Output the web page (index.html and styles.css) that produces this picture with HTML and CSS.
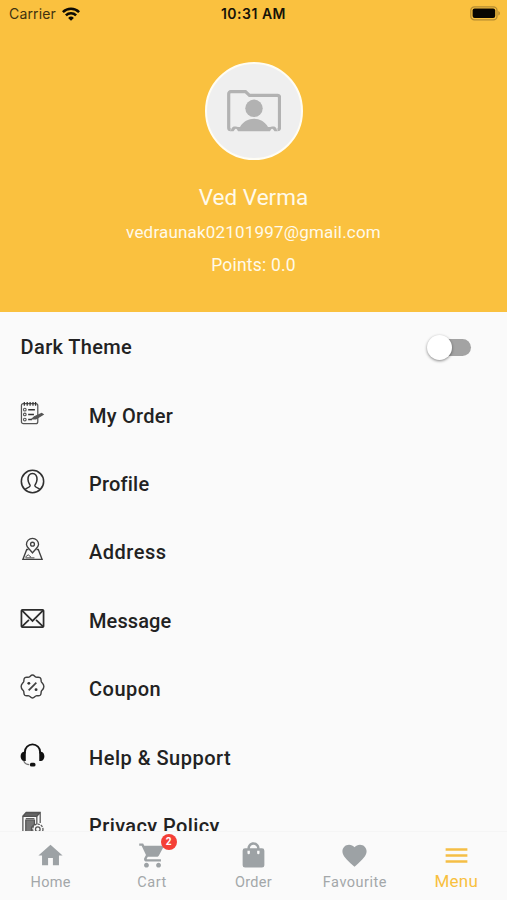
FILE: index.html
```html
<!DOCTYPE html>
<html lang="en">
<head>
<meta charset="utf-8">
<title>Menu</title>
<link rel="stylesheet" href="styles.css">
</head>
<body>
<div class="screen">
  <header class="header">
    <div class="status">
      <div class="carrier"><span>Carrier</span>
        <svg width="18" height="14" viewBox="0 0 18 14" fill="none" stroke="#0d0b04" stroke-width="2.6"><path d="M.9 5.1a11.6 11.6 0 0 1 16.2 0M3.9 8.400a7.3 7.3 0 0 1 10.2 0"/><path d="M9 13.800 6.1 10.900a4.2 4.2 0 0 1 5.8 0z" fill="#0d0b04" stroke="none"/></svg>
      </div>
      <time class="clock">10:31 AM</time>
      <svg class="battery" width="31" height="15" viewBox="0 0 31 15"><rect x=".8" y=".8" width="26.2" height="13" rx="3.6" fill="none" stroke="#b48c32" stroke-width="1.3"/><rect x="2.6" y="2.5" width="22.6" height="9.6" rx="2" fill="#080602"/><path d="M28.3 5v4.6c2.2-.8 2.2-3.8 0-4.6z" fill="#b48c32"/></svg>
    </div>
    <div class="avatar">
      <svg width="54" height="43" viewBox="0 0 54 43"><path d="M3.700 39.700a2 2 0 0 1-2-2V3.700a2 2 0 0 1 2-2h14.800l4 3.700h28a2 2 0 0 1 2 2v30.300a2 2 0 0 1-2 2" fill="none" stroke="#b2b2b2" stroke-width="3.200"/><path d="M11 41.300 10 39.500c-.5-1-1.700-1-2.200 0L6.500 41.300H3.500c1-2 1-4.300 3.500-4.800 2.500-.4 3.500 1 6 .5 6-11 22-11 28 0 2.500.5 3.500-.9 6-.5 2.500.5 2.500 2.800 3.500 4.800h-3L46.200 39.500c-.5-1-1.700-1-2.200 0l-1 1.800z" fill="#b2b2b2"/><circle cx="27" cy="18.300" r="8.700" fill="#b2b2b2"/></svg>
    </div>
    <div class="name"><span>Ved Verma</span></div>
    <div class="email"><span>vedraunak02101997@gmail.com</span></div>
    <div class="points"><span>Points: 0.0</span></div>
  </header>
  <main class="list">
    <div class="row theme"><span class="t-theme">Dark Theme</span><span class="switch"><i></i></span></div>
    <div class="row"><svg class="icon" viewBox="0 0 26 26" fill="none" stroke="#555" stroke-width="1.3"><rect x="1.500" y="2.800" width="17" height="20.700" rx="2"/><path d="M4.500 1v4M7.500 1v4M10.500 1v4M13.500 1v4M16.200 1v4" stroke="#333"/><g stroke-width="1.1"><circle cx="5" cy="9" r="1.400"/><circle cx="5" cy="14" r="1.400"/><circle cx="5" cy="19.300" r="1.400"/></g><path d="M8.500 9h7M8.500 14h6M8.500 19.300h4" stroke="#333" stroke-width="1.500"/><path d="m12.500 18.700 2.500-2.400 7.500-3.300 1.500 1-7.500 4.700z" fill="#555"/></svg><span class="t-order">My Order</span></div>
    <div class="row"><svg class="icon" viewBox="0 0 26 26" fill="none" stroke="#303030" stroke-width="1.600"><circle cx="13" cy="13" r="11.600"/><path d="M5.300 21.200c1-1.700 4.800-1.600 5.200-3.600.2-1.200-2-2.900-2.200-6.600C8.100 7 10 4.700 13 4.700s4.900 2.300 4.700 6.300c-.2 3.700-2.400 5.400-2.200 6.600.4 2 4.200 1.900 5.200 3.600"/></svg><span class="t-profile">Profile</span></div>
    <div class="row"><svg class="icon" viewBox="0 0 26 26" fill="none" stroke="#404040" stroke-width="1.400"><path d="M13 16.500C9.500 12 6.700 10.500 6.700 7.700a6.300 6.300 0 0 1 12.600 0c0 2.800-2.800 4.300-6.300 8.800z"/><circle cx="13" cy="7.500" r="2"/><path d="M8.800 13H7L3 23.300h20L19 13h-1.800"/><path d="m5.500 21 3-2.500 3 2.500M6 21.700h9" stroke-width="1"/></svg><span class="t-address">Address</span></div>
    <div class="row"><svg class="icon" viewBox="0 0 26 26" fill="none" stroke="#2c2c2c" stroke-width="1.800"><rect x="1.500" y="4" width="23" height="18" rx="1"/><path d="m2 4.500 11 11 11-11M2 21.500l7.300-7M24 21.500l-7.300-7"/></svg><span class="t-message">Message</span></div>
    <div class="row"><svg class="icon" viewBox="0 0 26 26" fill="none" stroke="#404040" stroke-width="1.500"><path d="M13 1c2 0 2.300 1.900 3.700 2.300 1.500.4 2.800-.6 4.300.6 1.500 1.300.6 2.700 1.200 4.200.6 1.400 2.600 2 2.600 4.900s-2 3.500-2.600 4.900c-.6 1.500.3 2.900-1.200 4.200-1.500 1.200-2.800.2-4.300.6-1.400.4-1.700 2.300-3.700 2.300s-2.300-1.900-3.700-2.300c-1.500-.4-2.800.6-4.300-.6-1.500-1.300-.6-2.700-1.200-4.200C3.200 16.500 1.200 15.900 1.200 13s2-3.500 2.600-4.900C4.400 6.600 3.500 5.200 5 3.900c1.500-1.200 2.800-.2 4.300-.6C10.700 2.900 11 1 13 1z"/><path d="m9 17 8-8" stroke-width="1.800"/><circle cx="9.200" cy="9.700" r="1.500" fill="#333" stroke="none"/><circle cx="16.700" cy="16.300" r="1.500" fill="#333" stroke="none"/></svg><span class="t-coupon">Coupon</span></div>
    <div class="row"><svg class="icon" viewBox="0 0 26 26" fill="none" stroke="#111" stroke-width="1.900"><path d="M5 11V9.500a8 8 0 0 1 16 0V11"/><path d="M6 9H4C-.5 9.600-.5 18 4 18.700h2zM20 9h2c4.500.6 4.500 9 0 9.700h-2z" fill="#111" stroke="none"/><path d="M4 18.500c.6 2.600 2.500 3.800 5.500 4" stroke="#777" stroke-width="1.300"/><rect x="10.200" y="20.500" width="6" height="4" rx="2" fill="#111" stroke="none"/></svg><span class="t-help">Help &amp; Support</span></div>
    <div class="row"><svg class="icon" viewBox="0 0 26 26" fill="none" stroke="#555" stroke-width="1.300"><path d="M3 5.500 6.500 1.500H21v11M3 5.500h14.500V14M17.500 5.500 21 1.500M3 5.500V24h9"/><path d="M3.500 5 6.500 2H20l-2.500 3z" fill="#666"/><path d="M6 9.500h9V14l-3 3v5H6z" fill="#777"/><path d="M6 8h9"/><circle cx="18.500" cy="19" r="5.400" fill="#fafafa" stroke-dasharray="2.500 1"/><circle cx="18.500" cy="19" r="2.400"/></svg><span class="t-privacy">Privacy Policy</span></div>
  </main>
  <nav class="nav">
    <div class="tab"><svg viewBox="0 0 24 24"><path d="M10 20v-6h4v6h5v-8h3L12 3 2 12h3v8z"/></svg><span class="t-home">Home</span></div>
    <div class="tab"><div class="cart"><svg viewBox="0 0 24 24"><path d="M7 18c-1.100 0-1.990.9-1.990 2S5.900 22 7 22s2-.9 2-2-.9-2-2-2zM1 2v2h2l3.600 7.590-1.350 2.450c-.16.28-.25.61-.25.960 0 1.100.9 2 2 2h12v-2H7.420c-.14 0-.25-.11-.25-.25l.03-.12.900-1.630h7.450c.750 0 1.410-.41 1.750-1.030l3.580-6.490A1 1 0 0 0 20 4H5.210l-.94-2H1zm16 16c-1.100 0-1.990.9-1.990 2s.89 2 1.990 2 2-.9 2-2-.9-2-2-2z"/></svg><b class="badge">2</b></div><span class="t-cart">Cart</span></div>
    <div class="tab"><svg viewBox="0 0 24 24"><path fill-rule="evenodd" d="M19 6h-2c0-2.760-2.240-5-5-5S7 3.240 7 6H5a2 2 0 0 0-2 2v12a2 2 0 0 0 2 2h14a2 2 0 0 0 2-2V8a2 2 0 0 0-2-2zm-7-3c1.660 0 3 1.340 3 3H9c0-1.660 1.340-3 3-3zM7 8h2v2a1 1 0 0 1-2 0zm8 0h2v2a1 1 0 0 1-2 0z"/></svg><span class="t-ord">Order</span></div>
    <div class="tab"><svg viewBox="0 0 24 24"><path d="m12 21.350-1.450-1.320C5.400 15.360 2 12.280 2 8.500 2 5.420 4.420 3 7.500 3c1.740 0 3.410.81 4.500 2.090C13.090 3.810 14.760 3 16.500 3 19.580 3 22 5.420 22 8.500c0 3.780-3.400 6.860-8.550 11.540z"/></svg><span class="t-fav">Favourite</span></div>
    <div class="tab active"><svg viewBox="0 0 24 24"><path d="M3 18h18v-2H3zm0-5h18v-2H3zm0-7v2h18V6z"/></svg><span class="t-menu">Menu</span></div>
  </nav>
</div>
</body>
</html>
```
FILE: styles.css
```css
* { box-sizing: border-box; }
body { margin: 0; font-family: Roboto, "Liberation Sans", sans-serif; background: #fafafa; }
.screen { width: 507px; height: 900px; display: flex; flex-direction: column; overflow: hidden; }
.header { height: 312px; flex: none; background: #fac13f; display: flex; flex-direction: column; align-items: center; color: #fffaea; }
.status { width: 100%; height: 27px; padding: 0 6px 0 9px; display: grid; grid-template-columns: 1fr auto 1fr; align-items: center; color: #161208; font-family: Inter, sans-serif; font-size: 14px; }
.carrier { display: flex; align-items: center; gap: 6px; color: #40320f; letter-spacing: .15px; }
.clock { font-weight: 600; letter-spacing: .5px; margin-right: 3px; }
.battery { justify-self: end; }
.avatar { width: 98px; height: 98px; margin-top: 35px; border: 2px solid #fffdf4; border-radius: 50%; background: #efefef; display: flex; align-items: center; justify-content: center; }
.name { margin-top: 23px; height: 28px; line-height: 28px; font-size: 22.5px; letter-spacing: 0; }
.email { margin-top: 9px; height: 24px; line-height: 24px; font-size: 17px; letter-spacing: .19px; }
.points { margin-top: 9px; height: 24px; line-height: 24px; font-size: 17.5px; letter-spacing: .2px; }
.list { flex: none; height: 519px; overflow: hidden; padding-top: 1px; color: #222; font-size: 20px; font-weight: 500; letter-spacing: .4px; }
.row { height: 68.4px; padding-left: 20px; display: flex; align-items: center; }
.icon { width: 25px; height: 25px; margin: 0 44px 5px 0; flex: none; }
.theme { justify-content: space-between; padding-right: 36px; }
.t-theme { margin-left: .6px; letter-spacing: .35px; }
.t-order { letter-spacing: .25px; }
.t-profile { letter-spacing: .2px; }
.t-address { letter-spacing: .5px; }
.t-message { letter-spacing: .1px; }
.t-coupon, .t-help { letter-spacing: .5px; }
.switch { width: 42px; height: 17px; border-radius: 9px; background: #a3a3a3; display: flex; align-items: center; }
.switch i { width: 25px; height: 25px; flex: none; margin-left: -2px; border-radius: 50%; background: #fff; box-shadow: 0 1px 3px #0007; }
.nav { height: 69px; flex: none; border-top: 1px solid #f5f5f5; display: grid; grid-template-columns: repeat(5, 1fr); color: #a3a7a9; font-size: 14.500px; }
.tab { display: flex; flex-direction: column; align-items: center; padding-top: 9px; }
.tab svg { width: 29px; height: 29px; display: block; fill: #9da2a5; }
.tab span { margin-top: 4px; line-height: 18px; letter-spacing: .3px; }
.tab .t-fav { letter-spacing: .5px; }
.tab .t-cart { letter-spacing: .6px; }
.cart { position: relative; }
.badge { position: absolute; left: 23px; top: -7px; width: 16px; height: 16px; border-radius: 50%; background: #f43f36; color: #fff; font-size: 10px; line-height: 16px; text-align: center; }
.active { color: #f8c03e; font-size: 17px; }
.tab.active svg { fill: #f5be45; }
.tab.active span { margin-top: 2px; }
```
